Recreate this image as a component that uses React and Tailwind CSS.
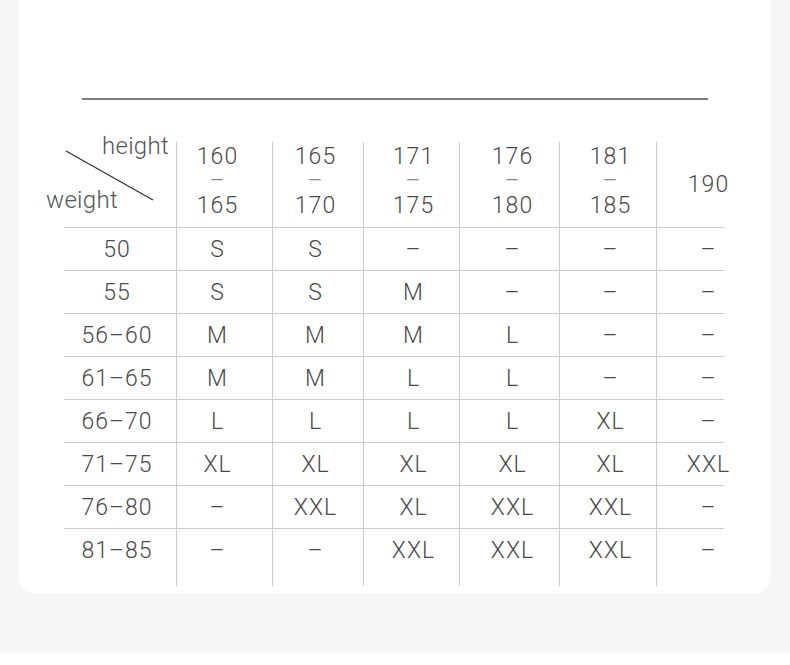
import React from 'react';

// size chart: weight (kg) rows x height (cm) columns
const heights = [['160', '165'], ['165', '170'], ['171', '175'], ['176', '180'], ['181', '185'], ['190']];

const rows = [
  ['50', 'S', 'S', '–', '–', '–', '–'],
  ['55', 'S', 'S', 'M', '–', '–', '–'],
  ['56–60', 'M', 'M', 'M', 'L', '–', '–'],
  ['61–65', 'M', 'M', 'L', 'L', '–', '–'],
  ['66–70', 'L', 'L', 'L', 'L', 'XL', '–'],
  ['71–75', 'XL', 'XL', 'XL', 'XL', 'XL', 'XXL'],
  ['76–80', '–', 'XXL', 'XL', 'XXL', 'XXL', '–'],
  ['81–85', '–', '–', 'XXL', 'XXL', 'XXL', '–'],
];

// widths + small nudges so text sits where the original has it
const cols = [
  'w-[112px] pr-[6px]',
  'w-[96px] border-l border-[#cbcbcb] pr-[14px]',
  'w-[91px] border-l border-[#cbcbcb] pr-[5px]',
  'w-[96px] border-l border-[#cbcbcb] pl-[4px]',
  'w-[100px] border-l border-[#cbcbcb] pl-[6px]',
  'w-[97px] border-l border-[#cbcbcb] pl-[5px]',
  'w-[104px] border-l border-[#cbcbcb]',
];

function Divider() {
  return <div className="h-px w-[660px] bg-[#cbcbcb]" />;
}

function HeaderRow() {
  return (
    <div className="flex h-[85px]">
      <div className="relative w-[112px] shrink-0 text-[24px] tracking-[0.3px] text-[#555]">
        <svg className="absolute left-[1px] top-[8px]" width="90" height="52" viewBox="0 0 90 52">
          <line x1="1" y1="1" x2="88" y2="50" stroke="#333" strokeWidth="1.3" />
        </svg>
        <div className="absolute right-[7px] top-[-11px] leading-[30px]">height</div>
        <div className="absolute left-[-18px] top-[43px] leading-[30px]">weight</div>
      </div>
      {heights.map((h, i) =>
        h.length === 2 ? (
          <div
            key={i}
            className={`${cols[i + 1]} shrink-0 flex flex-col items-center justify-center leading-[24.5px] pb-[6px]`}
          >
            <span>{h[0]}</span>
            <span className="text-[#888]">–</span>
            <span>{h[1]}</span>
          </div>
        ) : (
          <div key={i} className={`${cols[i + 1]} shrink-0 flex items-center justify-center pt-[2px]`}>
            {h[0]}
          </div>
        )
      )}
    </div>
  );
}

export default function App() {
  return (
    <div className="w-[790px] h-[665px] bg-white overflow-hidden">
      <div className="h-[653px] bg-[#f6f6f6] px-[19px]">
        <div className="h-[594px] bg-white rounded-b-[18px] pt-[98px]">
          <div className="ml-[63px] w-[626px] h-[2px] bg-[#7c7c7c]" />
          <div
            className="mt-[42px] ml-[45px] text-[23px] font-light text-[#4a4a4a] tracking-[1px]"
            style={{ fontFamily: 'Roboto, "Liberation Sans", sans-serif' }}
          >
            <HeaderRow />
            {rows.map((r, ri) => {
              const last = ri === rows.length - 1;
              return (
                <div key={ri}>
                  <Divider />
                  <div className="flex">
                    {r.map((v, ci) => (
                      <div
                        key={ci}
                        className={`${cols[ci]} shrink-0 flex items-center justify-center ${
                          last ? 'h-[57px] pt-[2px] pb-[15px]' : 'h-[42px] pt-[3px]'
                        }`}
                      >
                        {v}
                      </div>
                    ))}
                  </div>
                </div>
              );
            })}
          </div>
        </div>
      </div>
    </div>
  );
}
